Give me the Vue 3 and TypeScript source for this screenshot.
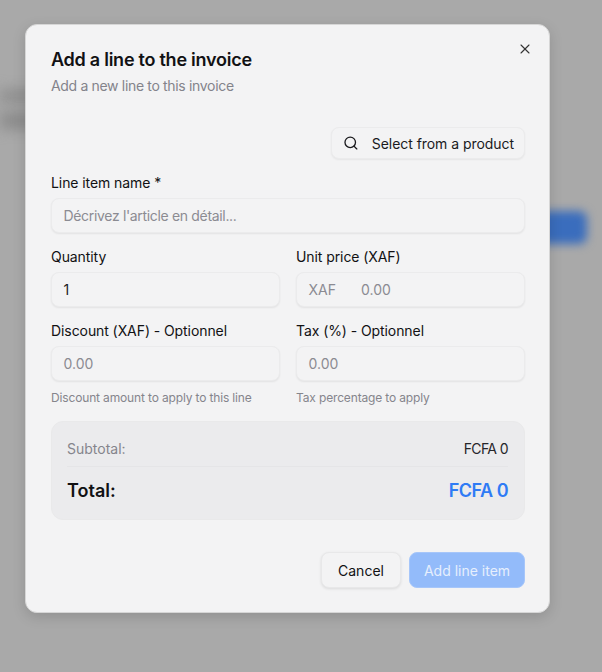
<template>
  <div class="page">
    <div class="backdrop">
      <div class="blur-text one"></div>
      <div class="blur-text two"></div>
      <div class="blur-button"></div>
    </div>

    <div class="modal">
      <button class="close" aria-label="Close">
        <svg width="16" height="16" viewBox="0 0 24 24" fill="none" stroke="currentColor" stroke-width="1.6" stroke-linecap="round">
          <path d="M18 6 6 18" />
          <path d="m6 6 12 12" />
        </svg>
      </button>

      <h2 class="title">{{ title }}</h2>
      <p class="subtitle">Add a new line to this invoice</p>

      <div class="picker-row">
        <button class="picker">
          <svg width="16" height="16" viewBox="0 0 24 24" fill="none" stroke="currentColor" stroke-width="2" stroke-linecap="round" stroke-linejoin="round">
            <circle cx="11" cy="11" r="8" />
            <path d="m21 21-4.3-4.3" />
          </svg>
          <span>Select from a product</span>
        </button>
      </div>

      <div class="field name-field">
        <label>Line item name *</label>
        <div class="input placeholder tight">Décrivez l'article en détail...</div>
      </div>

      <div class="grid">
        <div class="field">
          <label>Quantity</label>
          <div class="input">1</div>
        </div>
        <div class="field">
          <label>Unit price (XAF)</label>
          <div class="input placeholder">
            <span class="prefix">XAF</span>
            <span>0.00</span>
          </div>
        </div>
        <div class="field">
          <label>Discount (XAF) - Optionnel</label>
          <div class="input placeholder">0.00</div>
          <p class="hint">Discount amount to apply to this line</p>
        </div>
        <div class="field">
          <label>Tax (%) - Optionnel</label>
          <div class="input placeholder">0.00</div>
          <p class="hint">Tax percentage to apply</p>
        </div>
      </div>

      <div class="summary">
        <div class="sub-row">
          <span class="sub-label">Subtotal:</span>
          <span class="sub-value">{{ subtotal }}</span>
        </div>
        <div class="total-row">
          <span>Total:</span>
          <span class="total-value">{{ subtotal }}</span>
        </div>
      </div>

      <div class="actions">
        <button class="cancel">Cancel</button>
        <button class="submit">Add line item</button>
      </div>
    </div>
  </div>
</template>

<script setup lang="ts">
const title = 'Add a line to the invoice';
const subtotal = 'FCFA 0';
</script>

<style>
html,
body {
  margin: 0;
  background: #a9a9a9;
}
</style>

<style scoped>
.page {
  position: relative;
  width: 602px;
  height: 672px;
  overflow: hidden;
  box-sizing: border-box;
  padding: 24px 0 0 25px;
  background: #a9a9a9;
  font-family: Inter, "Noto Sans", sans-serif;
  color: #111113;
}

.backdrop {
  position: absolute;
  inset: 0;
}

.blur-text {
  position: absolute;
  left: 0;
  width: 50px;
  background: #8a8a8a;
  filter: blur(7px);
}

.blur-text.one {
  top: 90px;
  height: 12px;
}

.blur-text.two {
  top: 112px;
  height: 17px;
}

.blur-button {
  position: absolute;
  left: 500px;
  top: 211px;
  width: 87px;
  height: 33px;
  border-radius: 8px;
  background: #3a6dbd;
  filter: blur(5px);
}

.modal {
  position: relative;
  box-sizing: border-box;
  width: 525px;
  height: 589px;
  padding: 24px 24px 0 25px;
  background: #f3f3f4;
  border-radius: 12px;
  border: 1px solid #d6d6d6;
  box-shadow: 0 4px 14px rgba(0, 0, 0, 0.14);
}

.close {
  position: absolute;
  top: 16px;
  right: 16px;
  width: 16px;
  height: 16px;
  padding: 0;
  border: 0;
  background: none;
  color: #333;
  display: flex;
}

.title {
  margin: 0;
  font-size: 18px;
  line-height: 22px;
  font-weight: 600;
  letter-spacing: -0.25px;
}

.subtitle {
  margin: 5px 0 0;
  font-size: 14px;
  line-height: 20px;
  color: #83838b;
  letter-spacing: -0.33px;
}

.picker-row {
  display: flex;
  justify-content: flex-end;
  margin-top: 31px;
}

.picker {
  display: flex;
  align-items: center;
  gap: 13px;
  box-sizing: border-box;
  width: 194px;
  height: 32px;
  padding: 0 10px 0 11px;
  border: 1px solid #ebebec;
  border-radius: 8px;
  background: #f3f3f4;
  box-shadow: 0 1px 2px rgba(0, 0, 0, 0.06);
  font: inherit;
  font-size: 14px;
  font-weight: 400;
  color: #1a1a1d;
  letter-spacing: -0.05px;
  white-space: nowrap;
}

.name-field {
  margin-top: 14px;
}

.field label {
  display: block;
  font-size: 14px;
  line-height: 20px;
  font-weight: 400;
  color: #111113;
  letter-spacing: -0.08px;
  white-space: nowrap;
}

.input {
  display: flex;
  align-items: center;
  gap: 25px;
  box-sizing: border-box;
  height: 35px;
  margin-top: 5px;
  padding: 0 11.5px;
  border: 1px solid #ebebec;
  border-radius: 8px;
  background: #f3f3f4;
  box-shadow: 0 1px 2px rgba(0, 0, 0, 0.07);
  font-size: 14px;
  color: #1c1c1f;
}

.input.placeholder {
  color: #8b8b92;
}

.input.tight {
  letter-spacing: -0.33px;
}

.grid {
  display: grid;
  grid-template-columns: 229px 229px;
  column-gap: 16px;
  row-gap: 14px;
  margin-top: 14px;
}

.hint {
  margin: 9px 0 0;
  font-size: 12px;
  line-height: 16px;
  color: #85858c;
  letter-spacing: -0.15px;
  white-space: nowrap;
}

.summary {
  box-sizing: border-box;
  height: 99px;
  margin-top: 15px;
  padding: 16px 16px 0 15px;
  border: 1px solid #e9e9ea;
  border-radius: 12px;
  background: #ebebed;
}

.sub-row,
.total-row {
  display: flex;
  justify-content: space-between;
  align-items: center;
}

.sub-row {
  height: 29px;
  padding-bottom: 8px;
  box-sizing: border-box;
  border-bottom: 1px solid #e5e5e7;
  font-size: 14px;
}

.sub-label {
  color: #85858c;
}

.sub-value {
  color: #26262a;
  letter-spacing: -0.6px;
}

.total-row {
  margin-top: 11px;
  height: 24px;
  font-size: 18px;
  font-weight: 600;
}

.total-value {
  color: #2f7bf5;
  letter-spacing: -0.5px;
}

.actions {
  display: flex;
  justify-content: flex-end;
  gap: 8px;
  margin-top: 32px;
}

.actions button {
  box-sizing: border-box;
  height: 36px;
  border-radius: 8px;
  font: inherit;
  font-size: 14px;
  font-weight: 400;
}

.cancel {
  width: 80px;
  border: 1px solid #e8e8e9;
  background: #f3f3f4;
  color: #111113;
  box-shadow: 0 1px 3px rgba(0, 0, 0, 0.1);
}

.submit {
  width: 116px;
  border: 1px solid #a6c6fa;
  background: #93bbfa;
  color: #e6effd;
}
</style>
